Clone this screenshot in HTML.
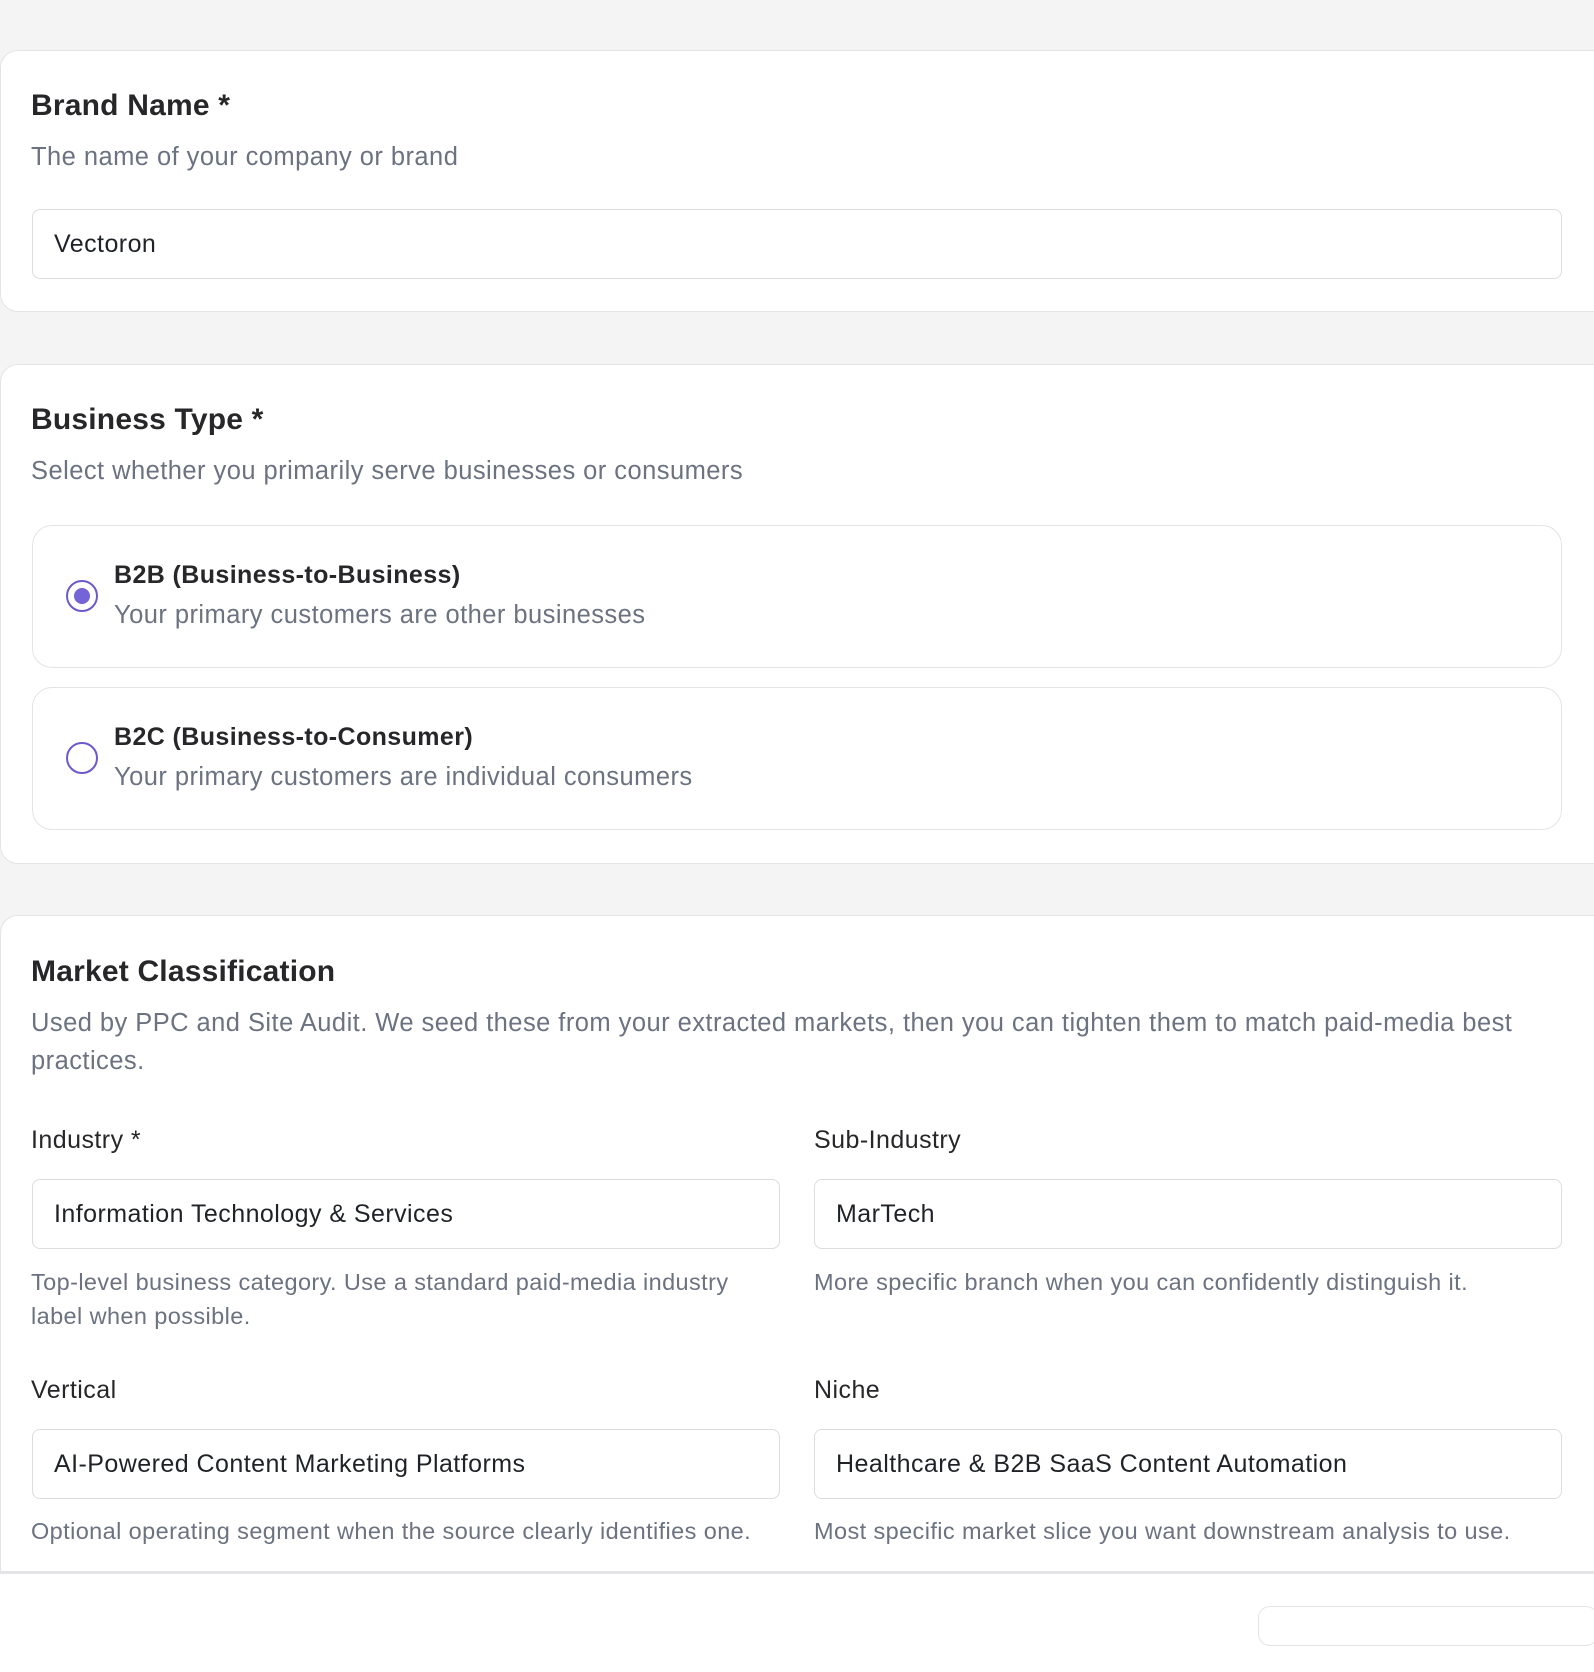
<!DOCTYPE html>
<html><head><style>
*{box-sizing:border-box;margin:0;padding:0}
body{width:1594px;height:1620px;background:#f4f4f5;font-family:"Liberation Sans",sans-serif;position:relative;overflow:hidden;color:#1f2328}
.card{position:absolute;left:0;width:1620px;background:#fff;border:1.5px solid #e4e4e7;border-radius:18px}
.abs{position:absolute;white-space:nowrap}
.t{font-size:30px;font-weight:bold;color:#27272a;letter-spacing:0.2px}
.s{font-size:25.5px;color:#6b7280;letter-spacing:0.45px}
.inp{position:absolute;border:1.5px solid #dcdce0;border-radius:8px;background:#fff;font-size:25px;letter-spacing:0.45px;color:#1f2328;padding-left:21px;display:flex;align-items:center}
.lab{font-size:25px;color:#27272a;letter-spacing:0.45px}
.h{font-size:23.5px;color:#6b7280;line-height:34px;white-space:normal;letter-spacing:0.4px}
.opt{position:absolute;left:32px;width:1530px;border:1.5px solid #e4e4e7;border-radius:20px}
.radio{position:absolute;left:33px;width:32px;height:32px;border:2px solid #6a5acd;border-radius:50%}
</style></head><body>
<div class="card" style="top:50px;height:262px"></div>
<div class="abs t" style="left:31px;top:89px">Brand Name *</div>
<div class="abs s" style="left:31px;top:143px">The name of your company or brand</div>
<div class="inp" style="left:32px;top:209px;width:1530px;height:70px">Vectoron</div>

<div class="card" style="top:364px;height:500px"></div>
<div class="abs t" style="left:31px;top:403px">Business Type *</div>
<div class="abs s" style="left:31px;top:457px">Select whether you primarily serve businesses or consumers</div>
<div class="opt" style="top:525px;height:143px"><div class="radio" style="top:54px"><div style="position:absolute;left:6px;top:6px;width:16px;height:16px;border-radius:50%;background:#7563d8"></div></div>
<div class="abs" style="left:81px;top:35px;font-size:25px;letter-spacing:0.4px;font-weight:bold;color:#27272a">B2B (Business-to-Business)</div>
<div class="abs s" style="left:81px;top:75px">Your primary customers are other businesses</div></div>
<div class="opt" style="top:687px;height:143px"><div class="radio" style="top:54px"></div>
<div class="abs" style="left:81px;top:35px;font-size:25px;letter-spacing:0.4px;font-weight:bold;color:#27272a">B2C (Business-to-Consumer)</div>
<div class="abs s" style="left:81px;top:75px">Your primary customers are individual consumers</div></div>

<div class="card" style="top:915px;height:657px;border-radius:18px 18px 0 0"></div>
<div class="abs t" style="left:31px;top:955px">Market Classification</div>
<div class="abs s" style="left:31px;top:1004px;white-space:normal;width:1540px;line-height:38px">Used by PPC and Site Audit. We seed these from your extracted markets, then you can tighten them to match paid-media best practices.</div>
<div class="abs lab" style="left:31px;top:1126px">Industry *</div>
<div class="abs lab" style="left:814px;top:1126px">Sub-Industry</div>
<div class="inp" style="left:32px;top:1179px;width:748px;height:70px">Information Technology &amp; Services</div>
<div class="inp" style="left:814px;top:1179px;width:748px;height:70px">MarTech</div>
<div class="abs h" style="left:31px;top:1265px;width:740px">Top-level business category. Use a standard paid-media industry label when possible.</div>
<div class="abs h" style="left:814px;top:1265px;width:770px">More specific branch when you can confidently distinguish it.</div>
<div class="abs lab" style="left:31px;top:1376px">Vertical</div>
<div class="abs lab" style="left:814px;top:1376px">Niche</div>
<div class="inp" style="left:32px;top:1429px;width:748px;height:70px">AI-Powered Content Marketing Platforms</div>
<div class="inp" style="left:814px;top:1429px;width:748px;height:70px">Healthcare &amp; B2B SaaS Content Automation</div>
<div class="abs h" style="left:31px;top:1514px">Optional operating segment when the source clearly identifies one.</div>
<div class="abs h" style="left:814px;top:1514px">Most specific market slice you want downstream analysis to use.</div>
<div style="position:absolute;left:0;top:1572px;width:1594px;height:100px;background:#fff;border-top:2px solid #e4e4e7"></div>
<div style="position:absolute;left:1258px;top:1606px;width:340px;height:40px;border:1.5px solid #e4e4e7;border-radius:12px;background:#fff"></div>
</body></html>
